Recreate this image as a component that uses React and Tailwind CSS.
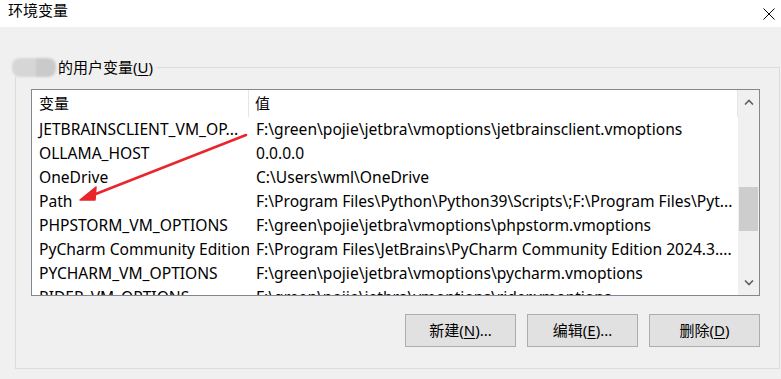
import React from "react";

const rows = [
  ["JETBRAINSCLIENT_VM_OP...", "F:\\green\\pojie\\jetbra\\vmoptions\\jetbrainsclient.vmoptions"],
  ["OLLAMA_HOST", "0.0.0.0"],
  ["OneDrive", "C:\\Users\\wml\\OneDrive"],
  ["Path", "F:\\Program Files\\Python\\Python39\\Scripts\\;F:\\Program Files\\Pyt..."],
  ["PHPSTORM_VM_OPTIONS", "F:\\green\\pojie\\jetbra\\vmoptions\\phpstorm.vmoptions"],
  ["PyCharm Community Edition", "F:\\Program Files\\JetBrains\\PyCharm Community Edition 2024.3...."],
  ["PYCHARM_VM_OPTIONS", "F:\\green\\pojie\\jetbra\\vmoptions\\pycharm.vmoptions"],
  ["RIDER_VM_OPTIONS", "F:\\green\\pojie\\jetbra\\vmoptions\\rider.vmoptions"],
];

function Btn({ label, k, tail }) {
  return (
    <button className="w-[111px] h-[33px] bg-[#e1e1e1] border border-[#adadad] flex items-center justify-center text-[15px] text-[#000]">
      {label}(<span className="underline underline-offset-2">{k}</span>){tail}
    </button>
  );
}

export default function App() {
  return (
    <div
      className="relative w-[781px] h-[379px] bg-[#f0f0f0] overflow-hidden text-black"
      style={{ fontFamily: '"Noto Sans", "Noto Sans CJK SC", sans-serif' }}
    >
      {/* title bar */}
      <div className="h-[27px] bg-white flex items-start justify-between pl-[8px] pr-[6px]">
        <span className="text-[15px] leading-[20px] mt-[0px]">环境变量</span>
        <svg width="12" height="12" viewBox="0 0 12 12" className="mt-[8px] mr-[0px]">
          <path d="M0.5 0.5 L11.5 11.5 M11.5 0.5 L0.5 11.5" stroke="#000" strokeWidth="1" fill="none" />
        </svg>
      </div>

      {/* group box */}
      <div className="relative ml-[15px] mr-[1px] mt-[40px] h-[302px] border border-[#dcdcdc]">
        <div className="absolute left-[-4px] top-[-11px] flex items-center bg-[#f0f0f0] pr-[4px]">
          <div className="w-[44px] h-[19px] rounded-[8px] blur-[1px] flex overflow-hidden">
            <div className="w-[24px] bg-[#d6d6d6]" />
            <div className="flex-1 bg-[#cacaca]" />
          </div>
          <span className="ml-[2px] text-[15px] leading-[20px]">
            的用户变量(<span className="underline underline-offset-2">U</span>)
          </span>
        </div>

        {/* list */}
        <div className="ml-[15px] mt-[21px] w-[729px] h-[207px] border border-[#828790] bg-white flex overflow-hidden">
          <div className="flex-1 flex flex-col overflow-hidden">
            <div className="h-[27px] shrink-0 flex items-center text-[15px]">
              <div className="w-[217px] h-full flex items-center pl-[7px] border-r border-[#e5e5e5] my-[2px]">变量</div>
              <div className="flex-1 h-full flex items-center pl-[6px] border-r border-[#e5e5e5]">值</div>
            </div>
            {rows.map(([a, b]) => (
              <div key={a} className="h-[24px] shrink-0 flex items-center text-[15.6px] whitespace-nowrap pt-[1px]">
                <div className="w-[217px] pl-[7px] overflow-hidden">{a}</div>
                <div className="flex-1 pl-[7px] overflow-hidden">{b}</div>
              </div>
            ))}
          </div>
          {/* scrollbar */}
          <div className="w-[21px] shrink-0 bg-[#f0f0f0] flex flex-col">
            <div className="h-[24px] flex items-center justify-center">
              <svg width="10" height="6" viewBox="0 0 10 6">
                <path d="M1 5.5 L5 1.5 L9 5.5" stroke="#606060" strokeWidth="1.6" fill="none" />
              </svg>
            </div>
            <div className="flex-1 flex flex-col">
              <div className="h-[73px]" />
              <div className="h-[44px] mx-[1px] bg-[#cdcdcd]" />
            </div>
            <div className="h-[24px] flex items-center justify-center">
              <svg width="10" height="6" viewBox="0 0 10 6">
                <path d="M1 0.5 L5 4.5 L9 0.5" stroke="#606060" strokeWidth="1.6" fill="none" />
              </svg>
            </div>
          </div>
        </div>

        {/* buttons */}
        <div className="mt-[18px] w-[744px] flex justify-end gap-[11px]">
          <Btn label="新建" k="N" tail="..." />
          <Btn label="编辑" k="E" tail="..." />
          <Btn label="删除" k="D" tail="" />
        </div>
      </div>

      {/* red arrow annotation */}
      <svg className="absolute left-0 top-0 pointer-events-none" width="781" height="379">
        <line x1="246" y1="135" x2="88" y2="197" stroke="#e8262b" strokeWidth="2.5" strokeLinecap="round" />
        <path d="M80 200 L96 187 L95 200 Z" fill="#e8262b" stroke="#e8262b" strokeWidth="1.5" strokeLinejoin="round" />
      </svg>
    </div>
  );
}
